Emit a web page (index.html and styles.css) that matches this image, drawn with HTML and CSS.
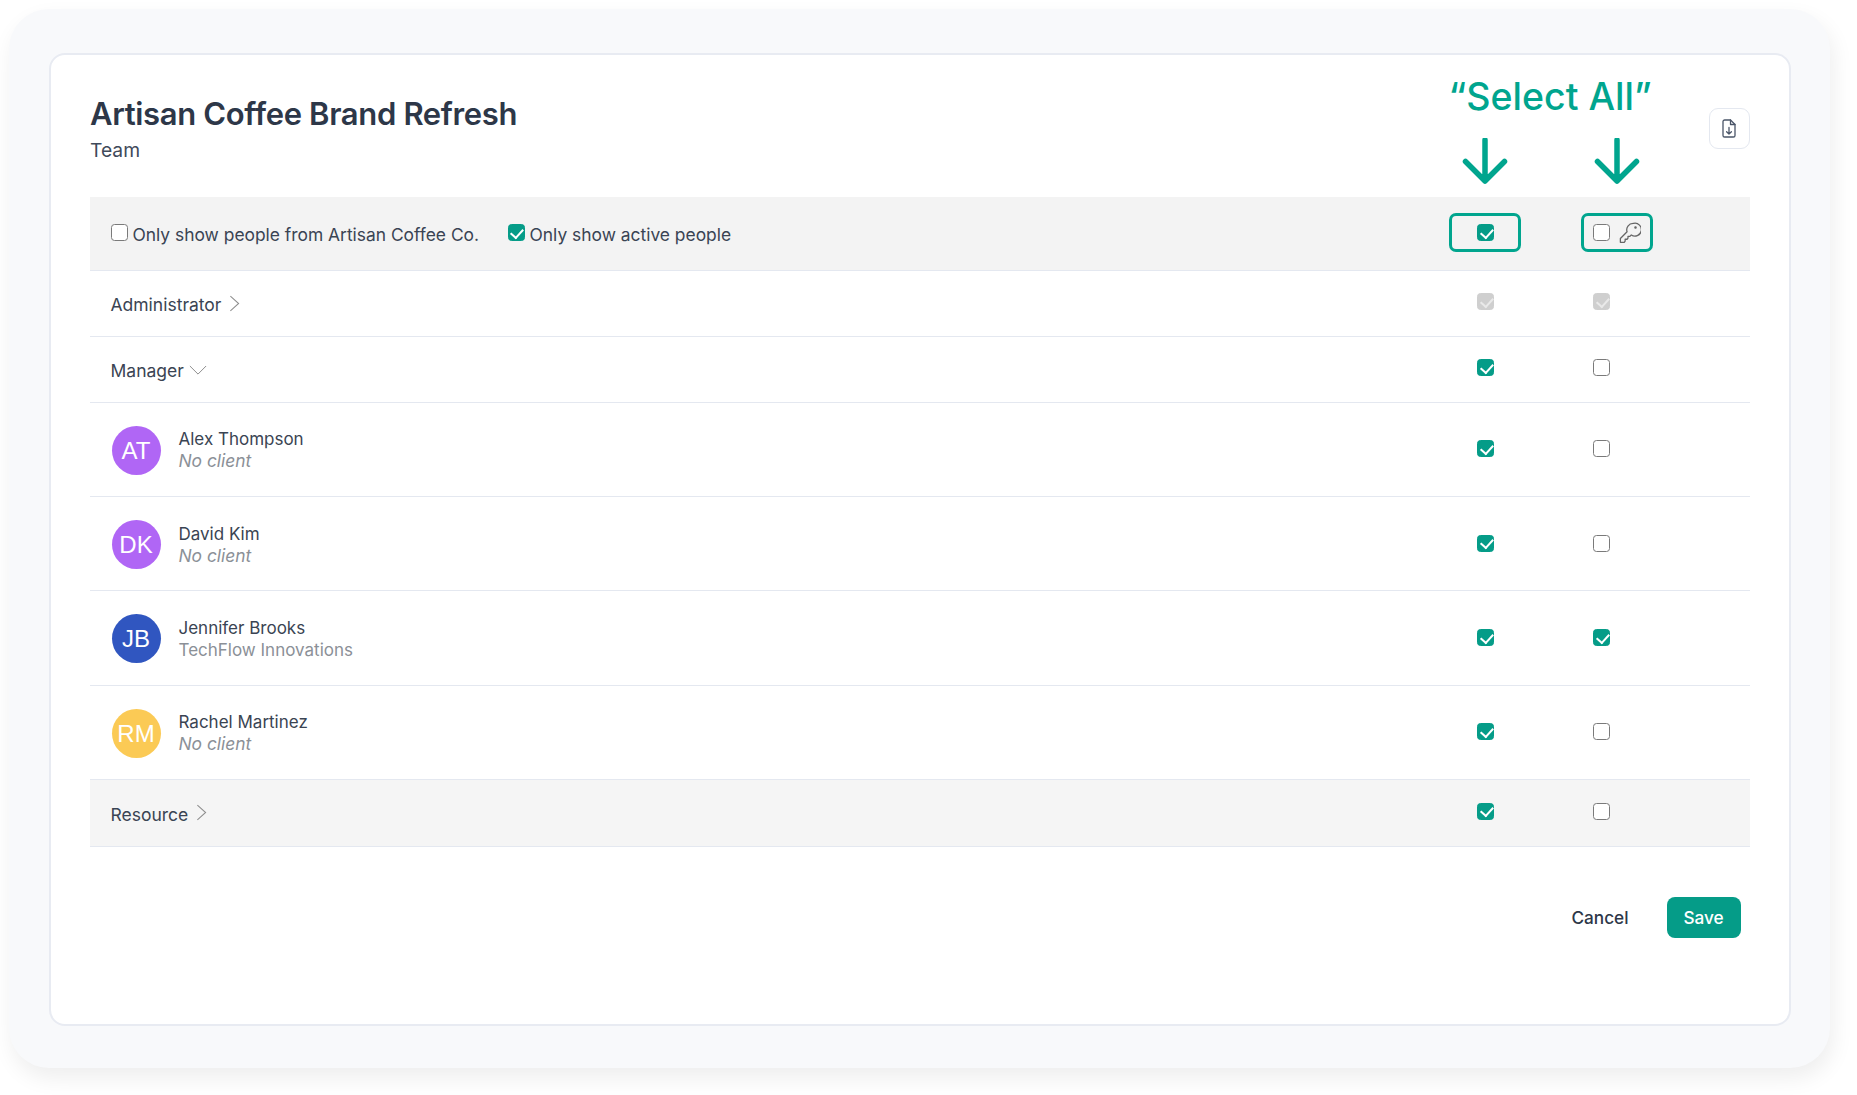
FILE: index.html
```html
<!DOCTYPE html>
<html lang="en">
<head>
<meta charset="utf-8">
<title>Artisan Coffee Brand Refresh</title>
<link rel="stylesheet" href="styles.css">
</head>
<body>
<div class="frame">
  <main class="card">
    <header class="head">
      <div>
        <h1 class="title">Artisan Coffee Brand Refresh</h1>
        <p class="subtitle">Team</p>
      </div>
      <button class="icon-btn" aria-label="Download">
        <svg class="doc-icon" viewBox="0 0 14 19" fill="none" stroke="#4a5568" stroke-width="1.3" stroke-linecap="round" stroke-linejoin="round"><path d="M8.5 1H2.6A1.6 1.6 0 0 0 1 2.6v13.8A1.6 1.6 0 0 0 2.6 18h8.8a1.6 1.6 0 0 0 1.6-1.6V5.5L8.5 1z"/><path d="M8.5 1v4.5H13"/><path d="M7 8.5v6.5M4.6 12.7 7 15.1l2.4-2.4"/></svg>
      </button>
    </header>

    <section class="table">
      <div class="row row-filter">
        <div class="filters">
          <label class="filter"><input type="checkbox" class="cb">Only show people from Artisan Coffee Co.</label>
          <label class="filter"><input type="checkbox" class="cb" checked>Only show active people</label>
        </div>
        <div class="cell"><input type="checkbox" class="cb" checked></div>
        <div class="cell cell-key">
          <input type="checkbox" class="cb">
          <svg class="key-icon" viewBox="0 0 24 24" fill="none" stroke="#666" stroke-width="1.4" stroke-linejoin="round" stroke-linecap="round"><path d="M15.5 1.5a7 7 0 0 0-6.7 9.2L1.5 18v4.2h4.2l1-1.4v-2h2.1l1-1.2v-1.9h2.1l1.5-1.6a7 7 0 1 0 2.6-12.6z"/><circle cx="18" cy="6" r=".7" fill="#666"/></svg>
        </div>
      </div>

      <div class="row row-group">
        <div class="group">Administrator
          <svg class="chev" viewBox="0 0 12 18" fill="none" stroke="#8d8d8d" stroke-width="1.1"><path d="M1.5 1l9 8-9 8"/></svg>
        </div>
        <div class="cell"><input type="checkbox" class="cb cb-off" checked disabled></div>
        <div class="cell"><input type="checkbox" class="cb cb-off" checked disabled></div>
      </div>

      <div class="row row-group">
        <div class="group">Manager
          <svg class="chev-down" viewBox="0 0 20 12" fill="none" stroke="#8d8d8d" stroke-width="1.1"><path d="M1 1l9 9 9-9"/></svg>
        </div>
        <div class="cell"><input type="checkbox" class="cb" checked></div>
        <div class="cell"><input type="checkbox" class="cb"></div>
      </div>

      <div class="row row-person">
        <div class="person">
          <span class="avatar av-purple">AT</span>
          <div><div class="name">Alex Thompson</div><div class="client client-none">No client</div></div>
        </div>
        <div class="cell"><input type="checkbox" class="cb" checked></div>
        <div class="cell"><input type="checkbox" class="cb"></div>
      </div>

      <div class="row row-person">
        <div class="person">
          <span class="avatar av-purple">DK</span>
          <div><div class="name">David Kim</div><div class="client client-none">No client</div></div>
        </div>
        <div class="cell"><input type="checkbox" class="cb" checked></div>
        <div class="cell"><input type="checkbox" class="cb"></div>
      </div>

      <div class="row row-person">
        <div class="person">
          <span class="avatar av-blue">JB</span>
          <div><div class="name">Jennifer Brooks</div><div class="client">TechFlow Innovations</div></div>
        </div>
        <div class="cell"><input type="checkbox" class="cb" checked></div>
        <div class="cell"><input type="checkbox" class="cb" checked></div>
      </div>

      <div class="row row-person">
        <div class="person">
          <span class="avatar av-yellow">RM</span>
          <div><div class="name">Rachel Martinez</div><div class="client client-none">No client</div></div>
        </div>
        <div class="cell"><input type="checkbox" class="cb" checked></div>
        <div class="cell"><input type="checkbox" class="cb"></div>
      </div>

      <div class="row row-group row-shaded">
        <div class="group">Resource
          <svg class="chev" viewBox="0 0 12 18" fill="none" stroke="#8d8d8d" stroke-width="1.1"><path d="M1.5 1l9 8-9 8"/></svg>
        </div>
        <div class="cell"><input type="checkbox" class="cb" checked></div>
        <div class="cell"><input type="checkbox" class="cb"></div>
      </div>
    </section>

    <footer class="actions">
      <button class="btn-cancel">Cancel</button>
      <button class="btn-save">Save</button>
    </footer>

    <div class="callout">
      <div class="callout-text">“Select All”</div>
      <div class="callout-cols">
        <div class="callout-col">
          <svg class="arrow" viewBox="0 0 46 46" fill="none" stroke="#00a58e" stroke-width="5.5" stroke-linecap="round" stroke-linejoin="round"><path d="M23 2v41M3.5 23.5 23 43l19.5-19.5"/></svg>
          <div class="callout-box"></div>
        </div>
        <div class="callout-col">
          <svg class="arrow" viewBox="0 0 46 46" fill="none" stroke="#00a58e" stroke-width="5.5" stroke-linecap="round" stroke-linejoin="round"><path d="M23 2v41M3.5 23.5 23 43l19.5-19.5"/></svg>
          <div class="callout-box"></div>
        </div>
      </div>
    </div>
  </main>
</div>
</body>
</html>
```

FILE: styles.css
```css
* { box-sizing: border-box; }
html, body { margin: 0; padding: 0; background: #fff; }
body {
  width: 1857px;
  height: 1095px;
  overflow: hidden;
  padding: 9px 0 0 9px;
  font-family: "Inter", "Liberation Sans", sans-serif;
  color: #2d3748;
}
.frame {
  width: 1821px;
  height: 1059px;
  padding: 44px 39px 42px 40px;
  background: #f8f9fb;
  border-radius: 40px;
  box-shadow: 3px 10px 22px rgba(0, 0, 0, 0.07);
}
.card {
  position: relative;
  height: 100%;
  padding: 0 39.5px 0 39px;
  background: #fff;
  border: 2px solid #e8ebf2;
  border-radius: 16px;
}
.head {
  display: flex;
  justify-content: space-between;
  height: 142px;
  padding-top: 41px;
}
.title {
  margin: 0;
  font-size: 31px;
  line-height: 36px;
  font-weight: 600;
  letter-spacing: -0.35px;
  color: #2d3748;
}
.subtitle {
  margin: 6px 0 0;
  font-size: 19.3px;
  line-height: 25px;
  color: #3f4a5a;
}
.icon-btn {
  display: flex;
  align-items: center;
  justify-content: center;
  width: 41px;
  height: 41px;
  margin-top: 12px;
  padding: 0;
  background: #fff;
  border: 1.5px solid #e4e8f0;
  border-radius: 9px;
}
.doc-icon { width: 14px; height: 19px; }

.row {
  display: grid;
  grid-template-columns: 1fr 116px 116px;
  align-items: center;
  padding: 0 90px 0 20.5px;
  border-bottom: 1.5px solid #e4e8f0;
  font-size: 17.5px;
}
.row-filter { height: 73.5px; background: #f3f3f3; }
.row-group { height: 66.3px; }
.row-person { height: 94.2px; padding-top: 1.5px; }
.row-shaded { height: 66.7px; background: #f5f5f5; }

.cell {
  position: relative;
  display: flex;
  align-items: center;
  justify-content: center;
  padding-bottom: 3px;
}
.row-filter .cell { padding-bottom: 2px; }

.cb {
  appearance: none;
  position: relative;
  display: block;
  flex: none;
  width: 17px;
  height: 17px;
  margin: 0;
  background: #fff;
  border: 1.3px solid #7a7a7a;
  border-radius: 3.5px;
}
.cb:checked { background: #059c88; border-color: #059c88; }
.cb:checked::after {
  content: "";
  position: absolute;
  left: 4.6px;
  top: 0.8px;
  width: 5.5px;
  height: 10px;
  border: solid #fff;
  border-width: 0 2.8px 2.8px 0;
  transform: rotate(42deg);
}
.cb-off:checked { background: #cfcfcf; border-color: #cfcfcf; }
.cb-off:checked::after { border-color: #e9e9e9; }

.filters { display: flex; gap: 28.5px; padding-top: 2px; }
.filter {
  display: flex;
  align-items: center;
  gap: 5px;
  color: #3a4453;
  font-size: 17.4px;
}
.filter .cb { margin-top: -3px; }

.key-icon {
  position: absolute;
  left: 75px;
  top: -2px;
  width: 22px;
  height: 22px;
}

.group { display: flex; align-items: center; gap: 8px; padding-top: 3px; color: #3a4453; }
.chev { width: 11px; height: 19px; margin-top: -3px; }
.chev-down { width: 18px; height: 11px; margin-left: -3px; }

.person { display: flex; align-items: center; gap: 18px; margin-left: 1px; }
.avatar {
  display: flex;
  align-items: center;
  justify-content: center;
  width: 49px;
  height: 49px;
  border-radius: 50%;
  color: #fff;
  font-family: "Liberation Sans", sans-serif;
  font-size: 24px;
  padding-top: 1px;
}
.av-purple { background: #b066f5; }
.av-blue { background: #3056c0; }
.av-yellow { background: #fbca55; }
.name { font-size: 17px; line-height: 22px; color: #3a4453; }
.client { font-size: 17px; line-height: 22px; color: #8b9097; }
.client-none { font-style: italic; font-size: 17.4px; }

.actions {
  display: flex;
  justify-content: flex-end;
  align-items: center;
  gap: 38px;
  padding: 50px 9px 0 0;
}
.btn-cancel, .btn-save {
  padding: 0;
  border: 0;
  background: none;
  font: inherit;
  font-size: 17.2px;
  font-weight: 500;
}
.btn-cancel { color: #2d3748; }
.btn-save {
  width: 74px;
  height: 41px;
  background: #059c88;
  border-radius: 8px;
  color: #fff;
}

.callout {
  position: absolute;
  top: 18.5px;
  left: 1397.5px;
  width: 206px;
}
.callout-text {
  font-size: 37.5px;
  line-height: 46px;
  font-weight: 500;
  color: #00a58e;
  white-space: nowrap;
}
.callout-cols { display: flex; gap: 60px; margin-top: 18px; }
.callout-col { display: flex; flex-direction: column; align-items: center; width: 72px; }
.arrow { width: 46px; height: 46px; }
.callout-box {
  width: 72px;
  height: 39.5px;
  margin-top: 29px;
  border: 3.5px solid #00a58e;
  border-radius: 7px;
}
```
